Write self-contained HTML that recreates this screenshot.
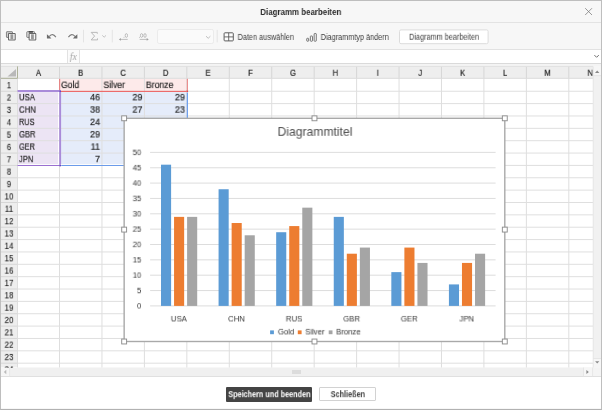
<!DOCTYPE html>
<html><head><meta charset="utf-8"><title>Diagramm bearbeiten</title>
<style>
html,body{margin:0;padding:0;}
body{width:602px;height:410px;overflow:hidden;background:#f7f7f7;font-family:"Liberation Sans",sans-serif;position:relative;}
div,span{position:absolute;box-sizing:border-box;}
.t{white-space:nowrap;transform-origin:0 0;line-height:12px;height:12px;}
svg{position:absolute;left:0;top:0;}
</style></head><body>
<div style="left:0;top:0;width:602px;height:410px;will-change:transform;">

<div style="left:0.00px;top:0.00px;width:602.00px;height:410.00px;background:#f7f7f7;"></div>
<div class="t" style="left:0;top:0;font-size:9.40px;color:#2a2a2a;font-weight:bold;transform:translate(260.36px,6.00px) matrix3d(1,0,0,0,0,1,0,0.00001,0,0,1,0,0,0,0,1) scale(0.8436,1.0000);">Diagramm bearbeiten</div>
<div style="left:0.00px;top:21.50px;width:602.00px;height:1.00px;background:#e3e3e3;"></div>
<div style="left:0.00px;top:49.00px;width:602.00px;height:1.00px;background:#e2e2e2;"></div>
<div style="left:1.00px;top:50.00px;width:600.00px;height:13.20px;background:#fff;"></div>
<div style="left:66.50px;top:50.00px;width:13.00px;height:13.20px;background:#fbfbfb;border-left:1px solid #e2e2e2;border-right:1px solid #e2e2e2;"></div>
<div class="t" style="left:0;top:0;font-size:9.60px;color:#a6a6a6;font-family:'Liberation Serif',serif;font-style:italic;transform:translate(69.84px,51.00px) matrix3d(1,0,0,0,0,1,0,0.00001,0,0,1,0,0,0,0,1);">fx</div>
<div style="left:0.00px;top:63.20px;width:602.00px;height:1.00px;background:#dadada;"></div>
<div style="left:1.00px;top:64.20px;width:600.00px;height:2.20px;background:#f4f4f4;"></div>
<div style="left:1.00px;top:66.40px;width:592.20px;height:301.10px;background:#fff;"></div>
<div style="left:1.00px;top:66.40px;width:592.20px;height:11.90px;background:#eeeeee;"></div>
<div style="left:1.00px;top:66.40px;width:16.50px;height:301.10px;background:#eeeeee;"></div>
<div style="left:60.20px;top:78.80px;width:126.20px;height:11.60px;background:#fdeaea;"></div>
<div style="left:18.00px;top:92.00px;width:40.20px;height:71.80px;background:#ece4f4;"></div>
<div style="left:61.40px;top:92.20px;width:124.70px;height:71.80px;background:#e5ecfa;"></div>
<svg width="602" height="410" viewBox="0 0 602 410">
<line x1="17.50" y1="66.40" x2="17.50" y2="78.30" stroke="#d6d6d6" stroke-width="1"/>
<line x1="17.50" y1="78.30" x2="17.50" y2="367.50" stroke="#dedede" stroke-width="1"/>
<line x1="59.52" y1="66.40" x2="59.52" y2="78.30" stroke="#d6d6d6" stroke-width="1"/>
<line x1="59.52" y1="78.30" x2="59.52" y2="367.50" stroke="#dedede" stroke-width="1"/>
<line x1="101.96" y1="66.40" x2="101.96" y2="78.30" stroke="#d6d6d6" stroke-width="1"/>
<line x1="101.96" y1="78.30" x2="101.96" y2="367.50" stroke="#dedede" stroke-width="1"/>
<line x1="144.40" y1="66.40" x2="144.40" y2="78.30" stroke="#d6d6d6" stroke-width="1"/>
<line x1="144.40" y1="78.30" x2="144.40" y2="367.50" stroke="#dedede" stroke-width="1"/>
<line x1="186.84" y1="66.40" x2="186.84" y2="78.30" stroke="#d6d6d6" stroke-width="1"/>
<line x1="186.84" y1="78.30" x2="186.84" y2="367.50" stroke="#dedede" stroke-width="1"/>
<line x1="229.28" y1="66.40" x2="229.28" y2="78.30" stroke="#d6d6d6" stroke-width="1"/>
<line x1="229.28" y1="78.30" x2="229.28" y2="367.50" stroke="#dedede" stroke-width="1"/>
<line x1="271.72" y1="66.40" x2="271.72" y2="78.30" stroke="#d6d6d6" stroke-width="1"/>
<line x1="271.72" y1="78.30" x2="271.72" y2="367.50" stroke="#dedede" stroke-width="1"/>
<line x1="314.16" y1="66.40" x2="314.16" y2="78.30" stroke="#d6d6d6" stroke-width="1"/>
<line x1="314.16" y1="78.30" x2="314.16" y2="367.50" stroke="#dedede" stroke-width="1"/>
<line x1="356.60" y1="66.40" x2="356.60" y2="78.30" stroke="#d6d6d6" stroke-width="1"/>
<line x1="356.60" y1="78.30" x2="356.60" y2="367.50" stroke="#dedede" stroke-width="1"/>
<line x1="399.04" y1="66.40" x2="399.04" y2="78.30" stroke="#d6d6d6" stroke-width="1"/>
<line x1="399.04" y1="78.30" x2="399.04" y2="367.50" stroke="#dedede" stroke-width="1"/>
<line x1="441.48" y1="66.40" x2="441.48" y2="78.30" stroke="#d6d6d6" stroke-width="1"/>
<line x1="441.48" y1="78.30" x2="441.48" y2="367.50" stroke="#dedede" stroke-width="1"/>
<line x1="483.92" y1="66.40" x2="483.92" y2="78.30" stroke="#d6d6d6" stroke-width="1"/>
<line x1="483.92" y1="78.30" x2="483.92" y2="367.50" stroke="#dedede" stroke-width="1"/>
<line x1="526.36" y1="66.40" x2="526.36" y2="78.30" stroke="#d6d6d6" stroke-width="1"/>
<line x1="526.36" y1="78.30" x2="526.36" y2="367.50" stroke="#dedede" stroke-width="1"/>
<line x1="568.80" y1="66.40" x2="568.80" y2="78.30" stroke="#d6d6d6" stroke-width="1"/>
<line x1="568.80" y1="78.30" x2="568.80" y2="367.50" stroke="#dedede" stroke-width="1"/>
<line x1="1" y1="78.30" x2="17.50" y2="78.30" stroke="#d6d6d6" stroke-width="1"/>
<line x1="17.50" y1="78.30" x2="593.20" y2="78.30" stroke="#dadada" stroke-width="1"/>
<line x1="1" y1="91.26" x2="17.50" y2="91.26" stroke="#d6d6d6" stroke-width="1"/>
<line x1="17.50" y1="91.26" x2="593.20" y2="91.26" stroke="#dfdfdf" stroke-width="1"/>
<line x1="1" y1="103.62" x2="17.50" y2="103.62" stroke="#d6d6d6" stroke-width="1"/>
<line x1="17.50" y1="103.62" x2="593.20" y2="103.62" stroke="#dfdfdf" stroke-width="1"/>
<line x1="1" y1="115.98" x2="17.50" y2="115.98" stroke="#d6d6d6" stroke-width="1"/>
<line x1="17.50" y1="115.98" x2="593.20" y2="115.98" stroke="#dfdfdf" stroke-width="1"/>
<line x1="1" y1="128.34" x2="17.50" y2="128.34" stroke="#d6d6d6" stroke-width="1"/>
<line x1="17.50" y1="128.34" x2="593.20" y2="128.34" stroke="#dfdfdf" stroke-width="1"/>
<line x1="1" y1="140.70" x2="17.50" y2="140.70" stroke="#d6d6d6" stroke-width="1"/>
<line x1="17.50" y1="140.70" x2="593.20" y2="140.70" stroke="#dfdfdf" stroke-width="1"/>
<line x1="1" y1="153.06" x2="17.50" y2="153.06" stroke="#d6d6d6" stroke-width="1"/>
<line x1="17.50" y1="153.06" x2="593.20" y2="153.06" stroke="#dfdfdf" stroke-width="1"/>
<line x1="1" y1="165.42" x2="17.50" y2="165.42" stroke="#d6d6d6" stroke-width="1"/>
<line x1="17.50" y1="165.42" x2="593.20" y2="165.42" stroke="#dfdfdf" stroke-width="1"/>
<line x1="1" y1="177.78" x2="17.50" y2="177.78" stroke="#d6d6d6" stroke-width="1"/>
<line x1="17.50" y1="177.78" x2="593.20" y2="177.78" stroke="#dfdfdf" stroke-width="1"/>
<line x1="1" y1="190.14" x2="17.50" y2="190.14" stroke="#d6d6d6" stroke-width="1"/>
<line x1="17.50" y1="190.14" x2="593.20" y2="190.14" stroke="#dfdfdf" stroke-width="1"/>
<line x1="1" y1="202.50" x2="17.50" y2="202.50" stroke="#d6d6d6" stroke-width="1"/>
<line x1="17.50" y1="202.50" x2="593.20" y2="202.50" stroke="#dfdfdf" stroke-width="1"/>
<line x1="1" y1="214.86" x2="17.50" y2="214.86" stroke="#d6d6d6" stroke-width="1"/>
<line x1="17.50" y1="214.86" x2="593.20" y2="214.86" stroke="#dfdfdf" stroke-width="1"/>
<line x1="1" y1="227.22" x2="17.50" y2="227.22" stroke="#d6d6d6" stroke-width="1"/>
<line x1="17.50" y1="227.22" x2="593.20" y2="227.22" stroke="#dfdfdf" stroke-width="1"/>
<line x1="1" y1="239.58" x2="17.50" y2="239.58" stroke="#d6d6d6" stroke-width="1"/>
<line x1="17.50" y1="239.58" x2="593.20" y2="239.58" stroke="#dfdfdf" stroke-width="1"/>
<line x1="1" y1="251.94" x2="17.50" y2="251.94" stroke="#d6d6d6" stroke-width="1"/>
<line x1="17.50" y1="251.94" x2="593.20" y2="251.94" stroke="#dfdfdf" stroke-width="1"/>
<line x1="1" y1="264.30" x2="17.50" y2="264.30" stroke="#d6d6d6" stroke-width="1"/>
<line x1="17.50" y1="264.30" x2="593.20" y2="264.30" stroke="#dfdfdf" stroke-width="1"/>
<line x1="1" y1="276.66" x2="17.50" y2="276.66" stroke="#d6d6d6" stroke-width="1"/>
<line x1="17.50" y1="276.66" x2="593.20" y2="276.66" stroke="#dfdfdf" stroke-width="1"/>
<line x1="1" y1="289.02" x2="17.50" y2="289.02" stroke="#d6d6d6" stroke-width="1"/>
<line x1="17.50" y1="289.02" x2="593.20" y2="289.02" stroke="#dfdfdf" stroke-width="1"/>
<line x1="1" y1="301.38" x2="17.50" y2="301.38" stroke="#d6d6d6" stroke-width="1"/>
<line x1="17.50" y1="301.38" x2="593.20" y2="301.38" stroke="#dfdfdf" stroke-width="1"/>
<line x1="1" y1="313.74" x2="17.50" y2="313.74" stroke="#d6d6d6" stroke-width="1"/>
<line x1="17.50" y1="313.74" x2="593.20" y2="313.74" stroke="#dfdfdf" stroke-width="1"/>
<line x1="1" y1="326.10" x2="17.50" y2="326.10" stroke="#d6d6d6" stroke-width="1"/>
<line x1="17.50" y1="326.10" x2="593.20" y2="326.10" stroke="#dfdfdf" stroke-width="1"/>
<line x1="1" y1="338.46" x2="17.50" y2="338.46" stroke="#d6d6d6" stroke-width="1"/>
<line x1="17.50" y1="338.46" x2="593.20" y2="338.46" stroke="#dfdfdf" stroke-width="1"/>
<line x1="1" y1="350.82" x2="17.50" y2="350.82" stroke="#d6d6d6" stroke-width="1"/>
<line x1="17.50" y1="350.82" x2="593.20" y2="350.82" stroke="#dfdfdf" stroke-width="1"/>
<line x1="1" y1="363.18" x2="17.50" y2="363.18" stroke="#d6d6d6" stroke-width="1"/>
<line x1="17.50" y1="363.18" x2="593.20" y2="363.18" stroke="#dfdfdf" stroke-width="1"/>
<line x1="1" y1="66.40" x2="593.20" y2="66.40" stroke="#e0e0e0" stroke-width="1"/>
<path d="M17.50 66.40 V78.30 H1" fill="none" stroke="#a9ae93" stroke-width="0.9"/>
<polygon points="16.00,69.00 16.00,76.50 7.50,76.50" fill="#b9b9b9"/>
<path d="M59.7 78.80 V90.3 M187.3 78.80 V90.5" fill="none" stroke="#e86464" stroke-width="0.9"/>
<path d="M61 91.35 H186.6" fill="none" stroke="#ec6b6b" stroke-width="1.1"/>
<rect x="186.5" y="90.4" width="1.6" height="1.7" fill="#e04a4a"/>
<path d="M17.50 91.05 H59.4" fill="none" stroke="#a98bd9" stroke-width="1.9"/>
<path d="M60.15 92 V164.3" fill="none" stroke="#a98bd9" stroke-width="1.9"/>
<path d="M17.50 165.5 H59.4" fill="none" stroke="#9a70d1" stroke-width="1.2"/>
<rect x="59.3" y="90.3" width="1.7" height="1.7" fill="#6a40c4"/>
<rect x="59.3" y="164.6" width="1.7" height="1.7" fill="#6a40c4"/>
<path d="M187.35 92.4 V164.9" fill="none" stroke="#6fa0ee" stroke-width="1.3"/>
<path d="M61.3 165.5 H188" fill="none" stroke="#6b9bea" stroke-width="1.2"/>
</svg>
<div class="t" style="left:0;top:0;font-size:9.30px;color:#1c1c1c;transform:translate(35.97px,66.60px) matrix3d(1,0,0,0,0,1,0,0.00001,0,0,1,0,0,0,0,1) scale(0.8200,1.0333);-webkit-text-stroke:0.22px currentColor;">A</div>
<div class="t" style="left:0;top:0;font-size:9.30px;color:#1c1c1c;transform:translate(78.20px,66.60px) matrix3d(1,0,0,0,0,1,0,0.00001,0,0,1,0,0,0,0,1) scale(0.8200,1.0333);-webkit-text-stroke:0.22px currentColor;">B</div>
<div class="t" style="left:0;top:0;font-size:9.30px;color:#1c1c1c;transform:translate(120.43px,66.60px) matrix3d(1,0,0,0,0,1,0,0.00001,0,0,1,0,0,0,0,1) scale(0.8200,1.0333);-webkit-text-stroke:0.22px currentColor;">C</div>
<div class="t" style="left:0;top:0;font-size:9.30px;color:#1c1c1c;transform:translate(162.87px,66.60px) matrix3d(1,0,0,0,0,1,0,0.00001,0,0,1,0,0,0,0,1) scale(0.8200,1.0333);-webkit-text-stroke:0.22px currentColor;">D</div>
<div class="t" style="left:0;top:0;font-size:9.30px;color:#1c1c1c;transform:translate(205.52px,66.60px) matrix3d(1,0,0,0,0,1,0,0.00001,0,0,1,0,0,0,0,1) scale(0.8200,1.0333);-webkit-text-stroke:0.22px currentColor;">E</div>
<div class="t" style="left:0;top:0;font-size:9.30px;color:#1c1c1c;transform:translate(248.17px,66.60px) matrix3d(1,0,0,0,0,1,0,0.00001,0,0,1,0,0,0,0,1) scale(0.8200,1.0333);-webkit-text-stroke:0.22px currentColor;">F</div>
<div class="t" style="left:0;top:0;font-size:9.30px;color:#1c1c1c;transform:translate(289.97px,66.60px) matrix3d(1,0,0,0,0,1,0,0.00001,0,0,1,0,0,0,0,1) scale(0.8200,1.0333);-webkit-text-stroke:0.22px currentColor;">G</div>
<div class="t" style="left:0;top:0;font-size:9.30px;color:#1c1c1c;transform:translate(332.63px,66.60px) matrix3d(1,0,0,0,0,1,0,0.00001,0,0,1,0,0,0,0,1) scale(0.8200,1.0333);-webkit-text-stroke:0.22px currentColor;">H</div>
<div class="t" style="left:0;top:0;font-size:9.30px;color:#1c1c1c;transform:translate(376.76px,66.60px) matrix3d(1,0,0,0,0,1,0,0.00001,0,0,1,0,0,0,0,1) scale(0.8200,1.0333);-webkit-text-stroke:0.22px currentColor;">I</div>
<div class="t" style="left:0;top:0;font-size:9.30px;color:#1c1c1c;transform:translate(418.35px,66.60px) matrix3d(1,0,0,0,0,1,0,0.00001,0,0,1,0,0,0,0,1) scale(0.8200,1.0333);-webkit-text-stroke:0.22px currentColor;">J</div>
<div class="t" style="left:0;top:0;font-size:9.30px;color:#1c1c1c;transform:translate(460.16px,66.60px) matrix3d(1,0,0,0,0,1,0,0.00001,0,0,1,0,0,0,0,1) scale(0.8200,1.0333);-webkit-text-stroke:0.22px currentColor;">K</div>
<div class="t" style="left:0;top:0;font-size:9.30px;color:#1c1c1c;transform:translate(503.02px,66.60px) matrix3d(1,0,0,0,0,1,0,0.00001,0,0,1,0,0,0,0,1) scale(0.8200,1.0333);-webkit-text-stroke:0.22px currentColor;">L</div>
<div class="t" style="left:0;top:0;font-size:9.30px;color:#1c1c1c;transform:translate(544.40px,66.60px) matrix3d(1,0,0,0,0,1,0,0.00001,0,0,1,0,0,0,0,1) scale(0.8200,1.0333);-webkit-text-stroke:0.22px currentColor;">M</div>
<div class="t" style="left:0;top:0;font-size:9.30px;color:#1c1c1c;transform:translate(587.55px,66.60px) matrix3d(1,0,0,0,0,1,0,0.00001,0,0,1,0,0,0,0,1) scale(0.8200,1.0333);-webkit-text-stroke:0.22px currentColor;">N</div>
<div class="t" style="left:0;top:0;font-size:9.30px;color:#1c1c1c;transform:translate(6.78px,78.88px) matrix3d(1,0,0,0,0,1,0,0.00001,0,0,1,0,0,0,0,1) scale(0.8600,1.0500);-webkit-text-stroke:0.1px currentColor;">1</div>
<div class="t" style="left:0;top:0;font-size:9.30px;color:#1c1c1c;transform:translate(6.78px,91.24px) matrix3d(1,0,0,0,0,1,0,0.00001,0,0,1,0,0,0,0,1) scale(0.8600,1.0500);-webkit-text-stroke:0.1px currentColor;">2</div>
<div class="t" style="left:0;top:0;font-size:9.30px;color:#1c1c1c;transform:translate(6.78px,103.60px) matrix3d(1,0,0,0,0,1,0,0.00001,0,0,1,0,0,0,0,1) scale(0.8600,1.0500);-webkit-text-stroke:0.1px currentColor;">3</div>
<div class="t" style="left:0;top:0;font-size:9.30px;color:#1c1c1c;transform:translate(6.78px,115.96px) matrix3d(1,0,0,0,0,1,0,0.00001,0,0,1,0,0,0,0,1) scale(0.8600,1.0500);-webkit-text-stroke:0.1px currentColor;">4</div>
<div class="t" style="left:0;top:0;font-size:9.30px;color:#1c1c1c;transform:translate(6.78px,128.32px) matrix3d(1,0,0,0,0,1,0,0.00001,0,0,1,0,0,0,0,1) scale(0.8600,1.0500);-webkit-text-stroke:0.1px currentColor;">5</div>
<div class="t" style="left:0;top:0;font-size:9.30px;color:#1c1c1c;transform:translate(6.78px,140.68px) matrix3d(1,0,0,0,0,1,0,0.00001,0,0,1,0,0,0,0,1) scale(0.8600,1.0500);-webkit-text-stroke:0.1px currentColor;">6</div>
<div class="t" style="left:0;top:0;font-size:9.30px;color:#1c1c1c;transform:translate(6.78px,153.04px) matrix3d(1,0,0,0,0,1,0,0.00001,0,0,1,0,0,0,0,1) scale(0.8600,1.0500);-webkit-text-stroke:0.1px currentColor;">7</div>
<div class="t" style="left:0;top:0;font-size:9.30px;color:#1c1c1c;transform:translate(6.78px,165.40px) matrix3d(1,0,0,0,0,1,0,0.00001,0,0,1,0,0,0,0,1) scale(0.8600,1.0500);-webkit-text-stroke:0.1px currentColor;">8</div>
<div class="t" style="left:0;top:0;font-size:9.30px;color:#1c1c1c;transform:translate(6.78px,177.76px) matrix3d(1,0,0,0,0,1,0,0.00001,0,0,1,0,0,0,0,1) scale(0.8600,1.0500);-webkit-text-stroke:0.1px currentColor;">9</div>
<div class="t" style="left:0;top:0;font-size:9.30px;color:#1c1c1c;transform:translate(4.55px,190.12px) matrix3d(1,0,0,0,0,1,0,0.00001,0,0,1,0,0,0,0,1) scale(0.8600,1.0500);-webkit-text-stroke:0.1px currentColor;">10</div>
<div class="t" style="left:0;top:0;font-size:9.30px;color:#1c1c1c;transform:translate(4.85px,202.48px) matrix3d(1,0,0,0,0,1,0,0.00001,0,0,1,0,0,0,0,1) scale(0.8600,1.0500);-webkit-text-stroke:0.1px currentColor;">11</div>
<div class="t" style="left:0;top:0;font-size:9.30px;color:#1c1c1c;transform:translate(4.55px,214.84px) matrix3d(1,0,0,0,0,1,0,0.00001,0,0,1,0,0,0,0,1) scale(0.8600,1.0500);-webkit-text-stroke:0.1px currentColor;">12</div>
<div class="t" style="left:0;top:0;font-size:9.30px;color:#1c1c1c;transform:translate(4.55px,227.20px) matrix3d(1,0,0,0,0,1,0,0.00001,0,0,1,0,0,0,0,1) scale(0.8600,1.0500);-webkit-text-stroke:0.1px currentColor;">13</div>
<div class="t" style="left:0;top:0;font-size:9.30px;color:#1c1c1c;transform:translate(4.55px,239.56px) matrix3d(1,0,0,0,0,1,0,0.00001,0,0,1,0,0,0,0,1) scale(0.8600,1.0500);-webkit-text-stroke:0.1px currentColor;">14</div>
<div class="t" style="left:0;top:0;font-size:9.30px;color:#1c1c1c;transform:translate(4.55px,251.92px) matrix3d(1,0,0,0,0,1,0,0.00001,0,0,1,0,0,0,0,1) scale(0.8600,1.0500);-webkit-text-stroke:0.1px currentColor;">15</div>
<div class="t" style="left:0;top:0;font-size:9.30px;color:#1c1c1c;transform:translate(4.55px,264.28px) matrix3d(1,0,0,0,0,1,0,0.00001,0,0,1,0,0,0,0,1) scale(0.8600,1.0500);-webkit-text-stroke:0.1px currentColor;">16</div>
<div class="t" style="left:0;top:0;font-size:9.30px;color:#1c1c1c;transform:translate(4.55px,276.64px) matrix3d(1,0,0,0,0,1,0,0.00001,0,0,1,0,0,0,0,1) scale(0.8600,1.0500);-webkit-text-stroke:0.1px currentColor;">17</div>
<div class="t" style="left:0;top:0;font-size:9.30px;color:#1c1c1c;transform:translate(4.55px,289.00px) matrix3d(1,0,0,0,0,1,0,0.00001,0,0,1,0,0,0,0,1) scale(0.8600,1.0500);-webkit-text-stroke:0.1px currentColor;">18</div>
<div class="t" style="left:0;top:0;font-size:9.30px;color:#1c1c1c;transform:translate(4.55px,301.36px) matrix3d(1,0,0,0,0,1,0,0.00001,0,0,1,0,0,0,0,1) scale(0.8600,1.0500);-webkit-text-stroke:0.1px currentColor;">19</div>
<div class="t" style="left:0;top:0;font-size:9.30px;color:#1c1c1c;transform:translate(4.55px,313.72px) matrix3d(1,0,0,0,0,1,0,0.00001,0,0,1,0,0,0,0,1) scale(0.8600,1.0500);-webkit-text-stroke:0.1px currentColor;">20</div>
<div class="t" style="left:0;top:0;font-size:9.30px;color:#1c1c1c;transform:translate(4.55px,326.08px) matrix3d(1,0,0,0,0,1,0,0.00001,0,0,1,0,0,0,0,1) scale(0.8600,1.0500);-webkit-text-stroke:0.1px currentColor;">21</div>
<div class="t" style="left:0;top:0;font-size:9.30px;color:#1c1c1c;transform:translate(4.55px,338.44px) matrix3d(1,0,0,0,0,1,0,0.00001,0,0,1,0,0,0,0,1) scale(0.8600,1.0500);-webkit-text-stroke:0.1px currentColor;">22</div>
<div class="t" style="left:0;top:0;font-size:9.30px;color:#1c1c1c;transform:translate(4.55px,350.80px) matrix3d(1,0,0,0,0,1,0,0.00001,0,0,1,0,0,0,0,1) scale(0.8600,1.0500);-webkit-text-stroke:0.1px currentColor;">23</div>
<div class="t" style="left:0;top:0;font-size:9.30px;color:#1c1c1c;transform:translate(4.55px,363.16px) matrix3d(1,0,0,0,0,1,0,0.00001,0,0,1,0,0,0,0,1) scale(0.8600,1.0500);-webkit-text-stroke:0.1px currentColor;">24</div>
<div class="t" style="left:0;top:0;font-size:9.40px;color:#1e1e1e;transform:translate(61.02px,78.33px) matrix3d(1,0,0,0,0,1,0,0.00001,0,0,1,0,0,0,0,1) scale(0.9216,1.0833);-webkit-text-stroke:0.18px currentColor;">Gold</div>
<div class="t" style="left:0;top:0;font-size:9.40px;color:#1e1e1e;transform:translate(103.46px,78.33px) matrix3d(1,0,0,0,0,1,0,0.00001,0,0,1,0,0,0,0,1) scale(0.9189,1.0833);-webkit-text-stroke:0.18px currentColor;">Silver</div>
<div class="t" style="left:0;top:0;font-size:9.40px;color:#1e1e1e;transform:translate(145.90px,78.33px) matrix3d(1,0,0,0,0,1,0,0.00001,0,0,1,0,0,0,0,1) scale(0.9266,1.0833);-webkit-text-stroke:0.18px currentColor;">Bronze</div>
<div class="t" style="left:0;top:0;font-size:9.40px;color:#1e1e1e;transform:translate(19.00px,90.69px) matrix3d(1,0,0,0,0,1,0,0.00001,0,0,1,0,0,0,0,1) scale(0.8278,1.0833);-webkit-text-stroke:0.18px currentColor;">USA</div>
<div class="t" style="left:0;top:0;font-size:9.40px;color:#1e1e1e;transform:translate(90.02px,90.69px) matrix3d(1,0,0,0,0,1,0,0.00001,0,0,1,0,0,0,0,1) scale(0.9600,1.0833);-webkit-text-stroke:0.18px currentColor;">46</div>
<div class="t" style="left:0;top:0;font-size:9.40px;color:#1e1e1e;transform:translate(132.46px,90.69px) matrix3d(1,0,0,0,0,1,0,0.00001,0,0,1,0,0,0,0,1) scale(0.9600,1.0833);-webkit-text-stroke:0.18px currentColor;">29</div>
<div class="t" style="left:0;top:0;font-size:9.40px;color:#1e1e1e;transform:translate(174.90px,90.69px) matrix3d(1,0,0,0,0,1,0,0.00001,0,0,1,0,0,0,0,1) scale(0.9600,1.0833);-webkit-text-stroke:0.18px currentColor;">29</div>
<div class="t" style="left:0;top:0;font-size:9.40px;color:#1e1e1e;transform:translate(19.00px,103.05px) matrix3d(1,0,0,0,0,1,0,0.00001,0,0,1,0,0,0,0,1) scale(0.8347,1.0833);-webkit-text-stroke:0.18px currentColor;">CHN</div>
<div class="t" style="left:0;top:0;font-size:9.40px;color:#1e1e1e;transform:translate(90.02px,103.05px) matrix3d(1,0,0,0,0,1,0,0.00001,0,0,1,0,0,0,0,1) scale(0.9600,1.0833);-webkit-text-stroke:0.18px currentColor;">38</div>
<div class="t" style="left:0;top:0;font-size:9.40px;color:#1e1e1e;transform:translate(132.46px,103.05px) matrix3d(1,0,0,0,0,1,0,0.00001,0,0,1,0,0,0,0,1) scale(0.9600,1.0833);-webkit-text-stroke:0.18px currentColor;">27</div>
<div class="t" style="left:0;top:0;font-size:9.40px;color:#1e1e1e;transform:translate(174.90px,103.05px) matrix3d(1,0,0,0,0,1,0,0.00001,0,0,1,0,0,0,0,1) scale(0.9600,1.0833);-webkit-text-stroke:0.18px currentColor;">23</div>
<div class="t" style="left:0;top:0;font-size:9.40px;color:#1e1e1e;transform:translate(19.00px,115.41px) matrix3d(1,0,0,0,0,1,0,0.00001,0,0,1,0,0,0,0,1) scale(0.7860,1.0833);-webkit-text-stroke:0.18px currentColor;">RUS</div>
<div class="t" style="left:0;top:0;font-size:9.40px;color:#1e1e1e;transform:translate(90.02px,115.41px) matrix3d(1,0,0,0,0,1,0,0.00001,0,0,1,0,0,0,0,1) scale(0.9600,1.0833);-webkit-text-stroke:0.18px currentColor;">24</div>
<div class="t" style="left:0;top:0;font-size:9.40px;color:#1e1e1e;transform:translate(132.46px,115.41px) matrix3d(1,0,0,0,0,1,0,0.00001,0,0,1,0,0,0,0,1) scale(0.9600,1.0833);-webkit-text-stroke:0.18px currentColor;">26</div>
<div class="t" style="left:0;top:0;font-size:9.40px;color:#1e1e1e;transform:translate(174.90px,115.41px) matrix3d(1,0,0,0,0,1,0,0.00001,0,0,1,0,0,0,0,1) scale(0.9600,1.0833);-webkit-text-stroke:0.18px currentColor;">32</div>
<div class="t" style="left:0;top:0;font-size:9.40px;color:#1e1e1e;transform:translate(19.00px,127.77px) matrix3d(1,0,0,0,0,1,0,0.00001,0,0,1,0,0,0,0,1) scale(0.8149,1.0833);-webkit-text-stroke:0.18px currentColor;">GBR</div>
<div class="t" style="left:0;top:0;font-size:9.40px;color:#1e1e1e;transform:translate(90.02px,127.77px) matrix3d(1,0,0,0,0,1,0,0.00001,0,0,1,0,0,0,0,1) scale(0.9600,1.0833);-webkit-text-stroke:0.18px currentColor;">29</div>
<div class="t" style="left:0;top:0;font-size:9.40px;color:#1e1e1e;transform:translate(132.46px,127.77px) matrix3d(1,0,0,0,0,1,0,0.00001,0,0,1,0,0,0,0,1) scale(0.9600,1.0833);-webkit-text-stroke:0.18px currentColor;">17</div>
<div class="t" style="left:0;top:0;font-size:9.40px;color:#1e1e1e;transform:translate(174.90px,127.77px) matrix3d(1,0,0,0,0,1,0,0.00001,0,0,1,0,0,0,0,1) scale(0.9600,1.0833);-webkit-text-stroke:0.18px currentColor;">19</div>
<div class="t" style="left:0;top:0;font-size:9.40px;color:#1e1e1e;transform:translate(19.00px,140.13px) matrix3d(1,0,0,0,0,1,0,0.00001,0,0,1,0,0,0,0,1) scale(0.7855,1.0833);-webkit-text-stroke:0.18px currentColor;">GER</div>
<div class="t" style="left:0;top:0;font-size:9.40px;color:#1e1e1e;transform:translate(90.69px,140.13px) matrix3d(1,0,0,0,0,1,0,0.00001,0,0,1,0,0,0,0,1) scale(0.9600,1.0833);-webkit-text-stroke:0.18px currentColor;">11</div>
<div class="t" style="left:0;top:0;font-size:9.40px;color:#1e1e1e;transform:translate(132.46px,140.13px) matrix3d(1,0,0,0,0,1,0,0.00001,0,0,1,0,0,0,0,1) scale(0.9600,1.0833);-webkit-text-stroke:0.18px currentColor;">19</div>
<div class="t" style="left:0;top:0;font-size:9.40px;color:#1e1e1e;transform:translate(174.90px,140.13px) matrix3d(1,0,0,0,0,1,0,0.00001,0,0,1,0,0,0,0,1) scale(0.9600,1.0833);-webkit-text-stroke:0.18px currentColor;">14</div>
<div class="t" style="left:0;top:0;font-size:9.40px;color:#1e1e1e;transform:translate(19.00px,152.49px) matrix3d(1,0,0,0,0,1,0,0.00001,0,0,1,0,0,0,0,1) scale(0.8052,1.0833);-webkit-text-stroke:0.18px currentColor;">JPN</div>
<div class="t" style="left:0;top:0;font-size:9.40px;color:#1e1e1e;transform:translate(95.04px,152.49px) matrix3d(1,0,0,0,0,1,0,0.00001,0,0,1,0,0,0,0,1) scale(0.9600,1.0833);-webkit-text-stroke:0.18px currentColor;">7</div>
<div class="t" style="left:0;top:0;font-size:9.40px;color:#1e1e1e;transform:translate(132.46px,152.49px) matrix3d(1,0,0,0,0,1,0,0.00001,0,0,1,0,0,0,0,1) scale(0.9600,1.0833);-webkit-text-stroke:0.18px currentColor;">14</div>
<div class="t" style="left:0;top:0;font-size:9.40px;color:#1e1e1e;transform:translate(174.90px,152.49px) matrix3d(1,0,0,0,0,1,0,0.00001,0,0,1,0,0,0,0,1) scale(0.9600,1.0833);-webkit-text-stroke:0.18px currentColor;">17</div>
<div style="left:593.20px;top:66.40px;width:7.80px;height:301.10px;background:#f1f1f1;"></div>
<div style="left:593.20px;top:66.40px;width:7.80px;height:9.10px;background:#f6f6f6;"></div>
<div style="left:593.20px;top:358.50px;width:7.80px;height:9.00px;background:#f6f6f6;"></div>
<div style="left:1.00px;top:367.50px;width:600.00px;height:8.80px;background:#f0f0f0;"></div>
<div style="left:1.00px;top:367.50px;width:8.50px;height:8.80px;background:#f6f6f6;"></div>
<div style="left:583.50px;top:367.50px;width:9.00px;height:8.80px;background:#f6f6f6;"></div>
<div style="left:592.50px;top:367.50px;width:8.50px;height:8.80px;background:#f4f4f4;"></div>
<div style="left:291.60px;top:370.30px;width:9.30px;height:3.30px;background:#dcdcdc;"></div>
<div style="left:1.00px;top:376.30px;width:600.00px;height:0.90px;background:#e0e0e0;"></div>
<svg width="602" height="410" viewBox="0 0 602 410">
<polygon points="595,73 599.4,73 597.2,70.6" fill="#8a8a8a"/>
<polygon points="595.1,361.2 599.3,361.2 597.2,363.5" fill="#8a8a8a"/>
<path d="M593.2 358.5 H601 M593.2 75.7 H601 M583.5 367.5 V376.3 M592.6 367.5 V376.3 M9.6 367.5 V376.3 M593.2 66.4 V367.5" stroke="#e4e4e4" stroke-width="0.9" fill="none"/>
<polygon points="586.4,369.9 586.4,374.1 588.8,372" fill="#8a8a8a"/>
<polygon points="6.3,369.8 6.3,374.2 3.8,372" fill="#bbb"/>
<path d="M594.4 55.1 L596.6 57.3 L598.8 55.1" fill="none" stroke="#6e6e6e" stroke-width="1"/>
<path d="M585.2 8.2 L592 15 M592 8.2 L585.2 15" fill="none" stroke="#7a7a7a" stroke-width="0.75"/>
</svg>
<div style="left:1.00px;top:377.20px;width:600.00px;height:31.30px;background:#fff;"></div>
<div style="left:225.80px;top:386.60px;width:86.40px;height:15.00px;background:#444;border-radius:1px;"></div>
<div class="t" style="left:0;top:0;font-size:8.55px;color:#fff;font-weight:bold;transform:translate(228.30px,388.20px) matrix3d(1,0,0,0,0,1,0,0.00001,0,0,1,0,0,0,0,1) scale(0.8480,1.0000);">Speichern und beenden</div>
<div style="left:319.00px;top:387.00px;width:56.80px;height:14.20px;background:#fff;border:1px solid #d2d2d2;border-radius:1px;"></div>
<div class="t" style="left:0;top:0;font-size:8.55px;color:#3c3c3c;font-weight:bold;transform:translate(330.70px,388.20px) matrix3d(1,0,0,0,0,1,0,0.00001,0,0,1,0,0,0,0,1) scale(0.8480,1.0000);">Schließen</div>
<svg width="602" height="410" viewBox="0 0 602 410">
<g fill="none" stroke="#fff" stroke-width="2.6" stroke-opacity="0.75" stroke-linejoin="round">
<rect x="6.4" y="31.7" width="6.1" height="5.7"/><rect x="8.5" y="33.5" width="6.7" height="6.5"/>
<rect x="26.8" y="31.7" width="7.8" height="5.7"/><rect x="29.1" y="33.5" width="6.7" height="6.5"/>
<path d="M47 34.4 V38.4 H51 M49.4 36.2 Q52.6 32.7 55.9 37"/>
<path d="M77.3 34.4 V38.4 H73.3 M74.9 36.2 Q71.7 32.7 68.4 37"/>
</g>
<rect x="6.4" y="31.7" width="6.1" height="5.7" rx="0.4" fill="#d2d2d2" stroke="#808080" stroke-width="1"/>
<rect x="8.5" y="33.5" width="6.7" height="6.5" rx="0.4" fill="#f6f6f6" stroke="#666" stroke-width="1.05"/>
<rect x="10.45" y="34.3" width="2.8" height="5" fill="#999"/>
<rect x="26.8" y="31.7" width="7.8" height="5.7" rx="0.4" fill="#e6e6e6" stroke="#808080" stroke-width="1"/>
<rect x="28.7" y="31.1" width="4.2" height="1.6" fill="#444"/>
<rect x="29.1" y="33.5" width="6.7" height="6.5" rx="0.4" fill="#f6f6f6" stroke="#666" stroke-width="1.05"/>
<rect x="31.05" y="34.3" width="2.8" height="5" fill="#999"/>
<path d="M49.4 36.3 Q52.6 32.6 55.9 37.1" fill="none" stroke="#808080" stroke-width="1.25"/>
<polygon points="46.9,34.2 46.9,38.5 51.4,38.4 49.6,36.6" fill="#6e6e6e"/>
<path d="M74.9 36.3 Q71.7 32.6 68.4 37.1" fill="none" stroke="#808080" stroke-width="1.25"/>
<polygon points="77.4,34.2 77.4,38.5 72.9,38.4 74.7,36.6" fill="#6e6e6e"/>
<line x1="83.5" y1="29.8" x2="83.5" y2="42.4" stroke="#e4e4e4" stroke-width="1"/>
<line x1="112.3" y1="29.8" x2="112.3" y2="42.4" stroke="#e4e4e4" stroke-width="1"/>
<line x1="217.2" y1="29.8" x2="217.2" y2="42.4" stroke="#e4e4e4" stroke-width="1"/>
<path d="M97.3 33.8 V32.4 H91.2 L94.6 36.1 L91.2 39.9 H97.5 V38.4" fill="none" stroke="#b2b2b2" stroke-width="0.9" stroke-linejoin="miter"/>
<path d="M102.3 35.4 L104.15 37.2 L106 35.4" fill="none" stroke="#b8b8b8" stroke-width="0.85"/>
<g fill="none" stroke="#ababab" stroke-width="0.75">
<ellipse cx="126.35" cy="35.5" rx="1.15" ry="1.95"/>
<ellipse cx="141.6" cy="35.5" rx="1.15" ry="1.95"/><ellipse cx="145" cy="35.5" rx="1.15" ry="1.95"/>
<path d="M120 39.4 H127.7"/><path d="M139.7 39.4 H147.6"/>
</g>
<polygon points="118.9,39.4 120.9,38.1 120.9,40.7" fill="#a0a0a0"/>
<polygon points="148.7,39.4 146.7,38.1 146.7,40.7" fill="#a0a0a0"/>
<rect x="123.6" y="36.9" width="0.8" height="0.8" fill="#ababab"/><rect x="139.2" y="36.9" width="0.8" height="0.8" fill="#ababab"/>
<rect x="157.5" y="29.5" width="56" height="14" rx="1.6" fill="#fafafa" stroke="#ebebeb" stroke-width="1"/>
<path d="M206 36.2 L208.2 38.3 L210.4 36.2" fill="none" stroke="#b8b8b8" stroke-width="0.9"/>
<rect x="224.1" y="32.8" width="9.2" height="8.1" rx="0.8" fill="#fdfdfd" stroke="#555" stroke-width="0.95"/>
<path d="M228.7 32.9V40.9 M224.2 36.9H233.2" stroke="#555" stroke-width="0.85"/>
<rect x="306.75" y="38.3" width="1.9" height="2.9" rx="0.5" fill="#fff" stroke="#6a6a6a" stroke-width="0.95"/>
<rect x="310.35" y="36.0" width="2.1" height="5.2" rx="0.5" fill="#fff" stroke="#6a6a6a" stroke-width="0.95"/>
<rect x="314.15" y="33.5" width="2.1" height="7.7" rx="0.5" fill="#fff" stroke="#6a6a6a" stroke-width="0.95"/>
<rect x="399.5" y="29.9" width="88.6" height="13.8" rx="1.5" fill="#fff" stroke="#dcdcdc" stroke-width="1"/>
</svg>
<div class="t" style="left:0;top:0;font-size:8.60px;color:#3c3c3c;transform:translate(237.60px,30.95px) matrix3d(1,0,0,0,0,1,0,0.00001,0,0,1,0,0,0,0,1) scale(0.8488,1.0000);">Daten auswählen</div>
<div class="t" style="left:0;top:0;font-size:8.60px;color:#3c3c3c;transform:translate(320.70px,31.00px) matrix3d(1,0,0,0,0,1,0,0.00001,0,0,1,0,0,0,0,1) scale(0.8488,1.0000);">Diagrammtyp ändern</div>
<div class="t" style="left:0;top:0;font-size:8.60px;color:#3c3c3c;transform:translate(409.10px,30.80px) matrix3d(1,0,0,0,0,1,0,0.00001,0,0,1,0,0,0,0,1) scale(0.8488,1.0000);">Diagramm bearbeiten</div>
<div style="left:124.15px;top:118.30px;width:380.65px;height:223.20px;background:#fff;"></div>
<svg width="602" height="410" viewBox="0 0 602 410">
<line x1="150.10" y1="305.90" x2="495.60" y2="305.90" stroke="#d9d9d9" stroke-width="0.9"/>
<line x1="150.10" y1="290.55" x2="495.60" y2="290.55" stroke="#d9d9d9" stroke-width="0.9"/>
<line x1="150.10" y1="275.20" x2="495.60" y2="275.20" stroke="#d9d9d9" stroke-width="0.9"/>
<line x1="150.10" y1="259.85" x2="495.60" y2="259.85" stroke="#d9d9d9" stroke-width="0.9"/>
<line x1="150.10" y1="244.50" x2="495.60" y2="244.50" stroke="#d9d9d9" stroke-width="0.9"/>
<line x1="150.10" y1="229.15" x2="495.60" y2="229.15" stroke="#d9d9d9" stroke-width="0.9"/>
<line x1="150.10" y1="213.80" x2="495.60" y2="213.80" stroke="#d9d9d9" stroke-width="0.9"/>
<line x1="150.10" y1="198.45" x2="495.60" y2="198.45" stroke="#d9d9d9" stroke-width="0.9"/>
<line x1="150.10" y1="183.10" x2="495.60" y2="183.10" stroke="#d9d9d9" stroke-width="0.9"/>
<line x1="150.10" y1="167.75" x2="495.60" y2="167.75" stroke="#d9d9d9" stroke-width="0.9"/>
<line x1="150.10" y1="152.40" x2="495.60" y2="152.40" stroke="#d9d9d9" stroke-width="0.9"/>
<rect x="161.00" y="164.68" width="10.1" height="141.22" fill="#5b9bd5"/>
<rect x="174.05" y="216.87" width="10.1" height="89.03" fill="#ed7d31"/>
<rect x="187.10" y="216.87" width="10.1" height="89.03" fill="#a5a5a5"/>
<rect x="218.58" y="189.24" width="10.1" height="116.66" fill="#5b9bd5"/>
<rect x="231.63" y="223.01" width="10.1" height="82.89" fill="#ed7d31"/>
<rect x="244.68" y="235.29" width="10.1" height="70.61" fill="#a5a5a5"/>
<rect x="276.17" y="232.22" width="10.1" height="73.68" fill="#5b9bd5"/>
<rect x="289.22" y="226.08" width="10.1" height="79.82" fill="#ed7d31"/>
<rect x="302.27" y="207.66" width="10.1" height="98.24" fill="#a5a5a5"/>
<rect x="333.75" y="216.87" width="10.1" height="89.03" fill="#5b9bd5"/>
<rect x="346.80" y="253.71" width="10.1" height="52.19" fill="#ed7d31"/>
<rect x="359.85" y="247.57" width="10.1" height="58.33" fill="#a5a5a5"/>
<rect x="391.33" y="272.13" width="10.1" height="33.77" fill="#5b9bd5"/>
<rect x="404.38" y="247.57" width="10.1" height="58.33" fill="#ed7d31"/>
<rect x="417.43" y="262.92" width="10.1" height="42.98" fill="#a5a5a5"/>
<rect x="448.92" y="284.41" width="10.1" height="21.49" fill="#5b9bd5"/>
<rect x="461.97" y="262.92" width="10.1" height="42.98" fill="#ed7d31"/>
<rect x="475.02" y="253.71" width="10.1" height="52.19" fill="#a5a5a5"/>
<rect x="124.15" y="118.30" width="380.65" height="223.20" fill="none" stroke="#a9a9a9" stroke-width="1.4"/>
<rect x="121.70" y="115.85" width="4.9" height="4.9" fill="#fff" stroke="#8e8e8e" stroke-width="0.95"/>
<rect x="312.03" y="115.85" width="4.9" height="4.9" fill="#fff" stroke="#8e8e8e" stroke-width="0.95"/>
<rect x="502.35" y="115.85" width="4.9" height="4.9" fill="#fff" stroke="#8e8e8e" stroke-width="0.95"/>
<rect x="121.70" y="227.15" width="4.9" height="4.9" fill="#fff" stroke="#8e8e8e" stroke-width="0.95"/>
<rect x="502.35" y="227.15" width="4.9" height="4.9" fill="#fff" stroke="#8e8e8e" stroke-width="0.95"/>
<rect x="121.70" y="339.05" width="4.9" height="4.9" fill="#fff" stroke="#8e8e8e" stroke-width="0.95"/>
<rect x="312.03" y="339.05" width="4.9" height="4.9" fill="#fff" stroke="#8e8e8e" stroke-width="0.95"/>
<rect x="502.35" y="339.05" width="4.9" height="4.9" fill="#fff" stroke="#8e8e8e" stroke-width="0.95"/>
<rect x="270.10" y="330.4" width="3.8" height="3.8" fill="#5b9bd5"/>
<rect x="297.80" y="330.4" width="3.8" height="3.8" fill="#ed7d31"/>
<rect x="328.70" y="330.4" width="3.8" height="3.8" fill="#a5a5a5"/>
</svg>
<div class="t" style="left:0;top:0;font-size:12.15px;color:#4a4a4a;transform:translate(277.53px,126.13px) matrix3d(1,0,0,0,0,1,0,0.00001,0,0,1,0,0,0,0,1) scale(1.0000,0.9667);">Diagrammtitel</div>
<div class="t" style="left:0;top:0;font-size:7.75px;color:#363636;transform:translate(136.99px,299.80px) matrix3d(1,0,0,0,0,1,0,0.00001,0,0,1,0,0,0,0,1) scale(1.0000,1.1000);">0</div>
<div class="t" style="left:0;top:0;font-size:7.75px;color:#363636;transform:translate(136.99px,284.45px) matrix3d(1,0,0,0,0,1,0,0.00001,0,0,1,0,0,0,0,1) scale(1.0000,1.1000);">5</div>
<div class="t" style="left:0;top:0;font-size:7.75px;color:#363636;transform:translate(132.68px,269.10px) matrix3d(1,0,0,0,0,1,0,0.00001,0,0,1,0,0,0,0,1) scale(1.0000,1.1000);">10</div>
<div class="t" style="left:0;top:0;font-size:7.75px;color:#363636;transform:translate(132.68px,253.75px) matrix3d(1,0,0,0,0,1,0,0.00001,0,0,1,0,0,0,0,1) scale(1.0000,1.1000);">15</div>
<div class="t" style="left:0;top:0;font-size:7.75px;color:#363636;transform:translate(132.68px,238.40px) matrix3d(1,0,0,0,0,1,0,0.00001,0,0,1,0,0,0,0,1) scale(1.0000,1.1000);">20</div>
<div class="t" style="left:0;top:0;font-size:7.75px;color:#363636;transform:translate(132.68px,223.05px) matrix3d(1,0,0,0,0,1,0,0.00001,0,0,1,0,0,0,0,1) scale(1.0000,1.1000);">25</div>
<div class="t" style="left:0;top:0;font-size:7.75px;color:#363636;transform:translate(132.68px,207.70px) matrix3d(1,0,0,0,0,1,0,0.00001,0,0,1,0,0,0,0,1) scale(1.0000,1.1000);">30</div>
<div class="t" style="left:0;top:0;font-size:7.75px;color:#363636;transform:translate(132.68px,192.35px) matrix3d(1,0,0,0,0,1,0,0.00001,0,0,1,0,0,0,0,1) scale(1.0000,1.1000);">35</div>
<div class="t" style="left:0;top:0;font-size:7.75px;color:#363636;transform:translate(132.68px,177.00px) matrix3d(1,0,0,0,0,1,0,0.00001,0,0,1,0,0,0,0,1) scale(1.0000,1.1000);">40</div>
<div class="t" style="left:0;top:0;font-size:7.75px;color:#363636;transform:translate(132.68px,161.65px) matrix3d(1,0,0,0,0,1,0,0.00001,0,0,1,0,0,0,0,1) scale(1.0000,1.1000);">45</div>
<div class="t" style="left:0;top:0;font-size:7.75px;color:#363636;transform:translate(132.68px,146.30px) matrix3d(1,0,0,0,0,1,0,0.00001,0,0,1,0,0,0,0,1) scale(1.0000,1.1000);">50</div>
<div class="t" style="left:0;top:0;font-size:7.80px;color:#363636;transform:translate(170.87px,312.70px) matrix3d(1,0,0,0,0,1,0,0.00001,0,0,1,0,0,0,0,1) scale(1.0000,1.1000);">USA</div>
<div class="t" style="left:0;top:0;font-size:7.80px;color:#363636;transform:translate(228.03px,312.70px) matrix3d(1,0,0,0,0,1,0,0.00001,0,0,1,0,0,0,0,1) scale(1.0000,1.1000);">CHN</div>
<div class="t" style="left:0;top:0;font-size:7.80px;color:#363636;transform:translate(285.82px,312.70px) matrix3d(1,0,0,0,0,1,0,0.00001,0,0,1,0,0,0,0,1) scale(1.0000,1.1000);">RUS</div>
<div class="t" style="left:0;top:0;font-size:7.80px;color:#363636;transform:translate(343.19px,312.70px) matrix3d(1,0,0,0,0,1,0,0.00001,0,0,1,0,0,0,0,1) scale(1.0000,1.1000);">GBR</div>
<div class="t" style="left:0;top:0;font-size:7.80px;color:#363636;transform:translate(400.77px,312.70px) matrix3d(1,0,0,0,0,1,0,0.00001,0,0,1,0,0,0,0,1) scale(1.0000,1.1000);">GER</div>
<div class="t" style="left:0;top:0;font-size:7.80px;color:#363636;transform:translate(459.44px,312.70px) matrix3d(1,0,0,0,0,1,0,0.00001,0,0,1,0,0,0,0,1) scale(1.0000,1.1000);">JPN</div>
<div class="t" style="left:0;top:0;font-size:7.75px;color:#363636;transform:translate(277.90px,325.54px) matrix3d(1,0,0,0,0,1,0,0.00001,0,0,1,0,0,0,0,1) scale(1.0000,1.1200);">Gold</div>
<div class="t" style="left:0;top:0;font-size:7.75px;color:#363636;transform:translate(305.30px,325.54px) matrix3d(1,0,0,0,0,1,0,0.00001,0,0,1,0,0,0,0,1) scale(1.0000,1.1200);">Silver</div>
<div class="t" style="left:0;top:0;font-size:7.75px;color:#363636;transform:translate(336.20px,325.54px) matrix3d(1,0,0,0,0,1,0,0.00001,0,0,1,0,0,0,0,1) scale(1.0000,1.1200);">Bronze</div>
<div style="left:0;top:0;width:602px;height:410px;border:1px solid #bebebe;border-bottom:1.4px solid #b2b2b2;"></div>
</div>
</body></html>
